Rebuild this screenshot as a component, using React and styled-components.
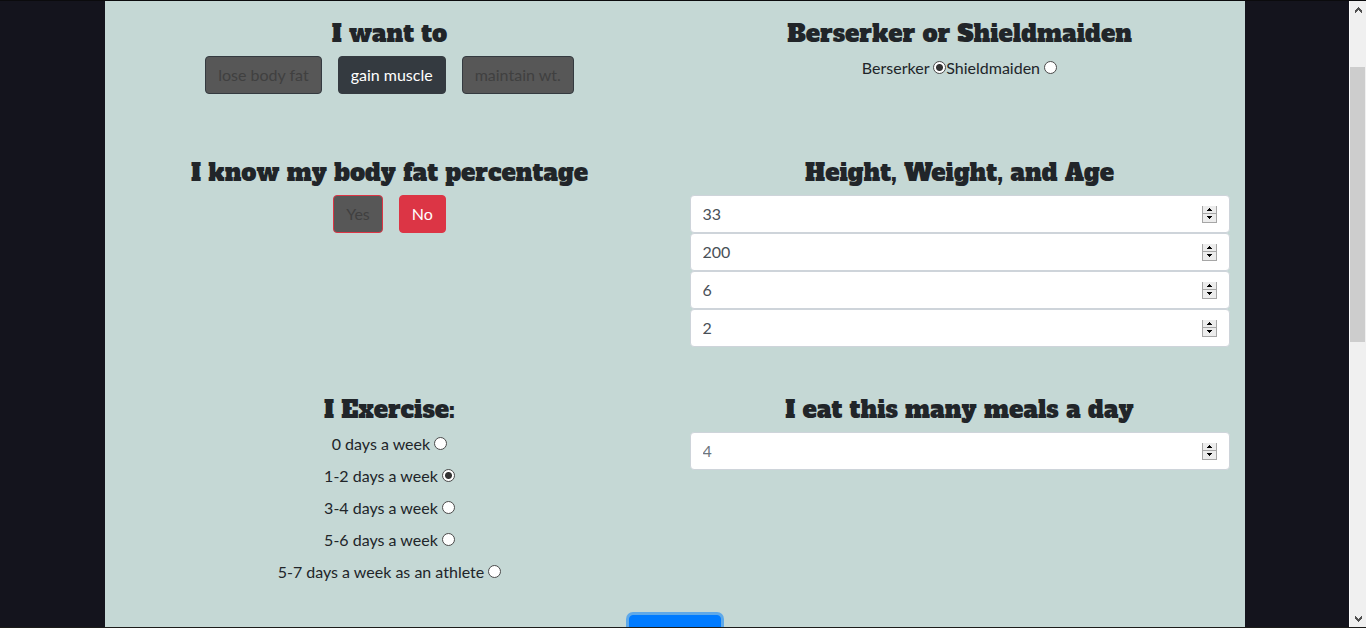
import React, { useState } from "react";
import styled, { createGlobalStyle } from "styled-components";

const GlobalStyle = createGlobalStyle`
  *, *::before, *::after { box-sizing: border-box; }
  body {
    margin: 0;
    background: #14141d;
    color: #212529;
    font-family: Lato, "Liberation Sans", sans-serif;
    font-size: 16px;
    line-height: 24px;
  }
`;

const Shell = styled.div`
  display: flex;
  height: 100vh;
  overflow: hidden;
  border-top: 1px solid #0b0b0d;
  border-bottom: 1px solid #1c1c1a;
`;

const Page = styled.main`
  flex: 1;
  min-width: 0;
  display: flex;
  justify-content: center;
`;

const Form = styled.form`
  display: flex;
  flex-direction: column;
  align-items: center;
  width: 100%;
  max-width: 1140px;
  padding-top: 13px;
  background: #c5d8d5;
`;

const Row = styled.div`
  display: grid;
  grid-template-columns: 1fr 1fr;
  width: 100%;
  flex: none;
  margin-bottom: ${(p) => p.$gap || 43}px;
`;

const Group = styled.section`
  padding: 0 15px;
  text-align: center;
`;

const Heading = styled.h3`
  margin: 0 0 2px;
  font-family: "Alfa Slab One", "DejaVu Serif Condensed", "DejaVu Serif", serif;
  font-size: 24px;
  font-weight: 500;
  line-height: 40px;
  white-space: nowrap;
`;

const Choices = styled.div`
  display: flex;
  justify-content: center;
  gap: 16px;
  margin-bottom: 16px;
`;

const tones = { dark: "#343a40", danger: "#dc3545" };

const Choice = styled.button`
  height: 38px;
  padding: 0 12px;
  border: 1px solid ${(p) => tones[p.$tone]};
  border-radius: 4px;
  background: ${(p) => (p.$on ? tones[p.$tone] : "#575757")};
  color: ${(p) => (p.$on ? "#fff" : "#404040")};
  font: inherit;
  cursor: pointer;
`;

const Line = styled.div`
  margin-bottom: 8px;
`;

const Radio = styled.input`
  appearance: none;
  width: 13px;
  height: 13px;
  margin: 0;
  border: 1px solid #4a4a4a;
  border-radius: 50%;
  background: #fff;
  &:checked {
    background: radial-gradient(circle, #333 0 3px, #fff 4px);
  }
`;

const Field = styled.div`
  display: flex;
  align-items: center;
  height: 38px;
  padding: 0 12px;
  border: 1px solid #ced4da;
  border-radius: 4px;
  background: #fff;
`;

const NumberInput = styled.input`
  flex: 1;
  min-width: 0;
  padding: 0;
  border: 0;
  outline: 0;
  background: transparent;
  color: #495057;
  font: inherit;
  appearance: textfield;
  &::-webkit-inner-spin-button { appearance: none; margin: 0; }
  &::placeholder { color: #6c757d; opacity: 1; }
`;

const Spinner = styled.span`
  display: flex;
  flex-direction: column;
  width: 15px;
  height: 17px;
  border: solid #a6a6a6;
  border-width: 0 1px 1px;
`;

const Step = styled.button`
  display: flex;
  flex: 1;
  align-items: center;
  justify-content: center;
  padding: 0;
  border: 0;
  background: #ececec;
  & + & { border-top: 1px solid #a6a6a6; }
`;

const Submit = styled.button`
  flex: none;
  width: 92px;
  height: 38px;
  border: 1px solid #007bff;
  border-radius: 4px;
  background: #007bff;
  box-shadow: 0 0 0 3px #5fa9e9;
`;

const ScrollBar = styled.div`
  display: flex;
  flex-direction: column;
  flex: none;
  width: 17px;
  border-left: 1px solid #fff;
  background: #f0f0f0;
`;

const ScrollArrow = styled.span`
  display: flex;
  align-items: center;
  justify-content: center;
  height: 17px;
`;

const Track = styled.div`
  display: flex;
  flex: 1;
  flex-direction: column;
  padding-right: 1px;
`;

const TrackPart = styled.div`
  flex: ${(p) => p.$size} 1 0;
  background: ${(p) => (p.$thumb ? "#cdcdcd" : "transparent")};
`;

function ChoiceGroup({ items, tone, initial }) {
  const [selected, setSelected] = useState(initial);
  return (
    <Choices>
      {items.map((item) => (
        <Choice
          key={item}
          type="button"
          $tone={tone}
          $on={item === selected}
          aria-pressed={item === selected}
          onClick={() => setSelected(item)}
        >
          {item}
        </Choice>
      ))}
    </Choices>
  );
}

function RadioLabel({ name, text, checked }) {
  return (
    <label>
      {text} <Radio type="radio" name={name} defaultChecked={checked} />
    </label>
  );
}

function NumberField({ label, initial, placeholder }) {
  const [value, setValue] = useState(initial || "");
  const step = (by) => setValue(String(Number(value || placeholder) + by));
  return (
    <Field>
      <NumberInput
        type="number"
        aria-label={label}
        value={value}
        placeholder={placeholder}
        onChange={(e) => setValue(e.target.value)}
      />
      <Spinner>
        <Step type="button" aria-label={`Increase ${label}`} onClick={() => step(1)}>
          <svg width="5" height="3" viewBox="0 0 5 3" shapeRendering="crispEdges">
            <path d="M2 0h1v1h1v1h1v1H0V2h1V1h1z" />
          </svg>
        </Step>
        <Step type="button" aria-label={`Decrease ${label}`} onClick={() => step(-1)}>
          <svg width="5" height="3" viewBox="0 0 5 3" shapeRendering="crispEdges">
            <path d="M0 0h5v1H4v1H3v1H2V2H1V1H0z" />
          </svg>
        </Step>
      </Spinner>
    </Field>
  );
}

const exercise = [
  "0 days a week",
  "1-2 days a week",
  "3-4 days a week",
  "5-6 days a week",
  "5-7 days a week as an athlete",
];

export default function App() {
  return (
    <>
      <GlobalStyle />
      <Shell>
        <Page>
          <Form onSubmit={(e) => e.preventDefault()}>
            <Row>
              <Group>
                <Heading>I want to</Heading>
                <ChoiceGroup
                  tone="dark"
                  initial="gain muscle"
                  items={["lose body fat", "gain muscle", "maintain wt."]}
                />
              </Group>
              <Group>
                <Heading>Berserker or Shieldmaiden</Heading>
                <Line>
                  <RadioLabel name="type" text="Berserker" checked />
                  <RadioLabel name="type" text="Shieldmaiden" />
                </Line>
              </Group>
            </Row>
            <Row>
              <Group>
                <Heading>I know my body fat percentage</Heading>
                <ChoiceGroup tone="danger" initial="No" items={["Yes", "No"]} />
              </Group>
              <Group>
                <Heading>Height, Weight, and Age</Heading>
                <NumberField label="Age" initial="33" />
                <NumberField label="Weight" initial="200" />
                <NumberField label="Height in feet" initial="6" />
                <NumberField label="Height in inches" initial="2" />
              </Group>
            </Row>
            <Row $gap={23}>
              <Group>
                <Heading>I Exercise:</Heading>
                {exercise.map((text, i) => (
                  <Line key={text}>
                    <RadioLabel name="exercise" text={text} checked={i === 1} />
                  </Line>
                ))}
              </Group>
              <Group>
                <Heading>I eat this many meals a day</Heading>
                <NumberField label="Meals a day" placeholder="4" />
              </Group>
            </Row>
            <Submit type="submit" aria-label="Submit" />
          </Form>
        </Page>
        <ScrollBar aria-hidden="true">
          <ScrollArrow>
            <svg width="7" height="6" viewBox="0 0 7 6" fill="#505050" shapeRendering="crispEdges">
              <path d="M3 0h1v1h1v1h1v1h1v3H6V5H5V4H4V3H3v1H2v1H1v1H0V3h1V2h1V1h1z" />
            </svg>
          </ScrollArrow>
          <Track>
            <TrackPart $size={49} />
            <TrackPart $size={275} $thumb />
            <TrackPart $size={268} />
          </Track>
          <ScrollArrow>
            <svg width="7" height="6" viewBox="0 0 7 6" fill="#505050" shapeRendering="crispEdges">
              <path d="M3 6h1V5h1V4h1V3h1V0H6v1H5v1H4v1H3V2H2V1H1V0H0v3h1v1h1v1h1z" />
            </svg>
          </ScrollArrow>
        </ScrollBar>
      </Shell>
    </>
  );
}
